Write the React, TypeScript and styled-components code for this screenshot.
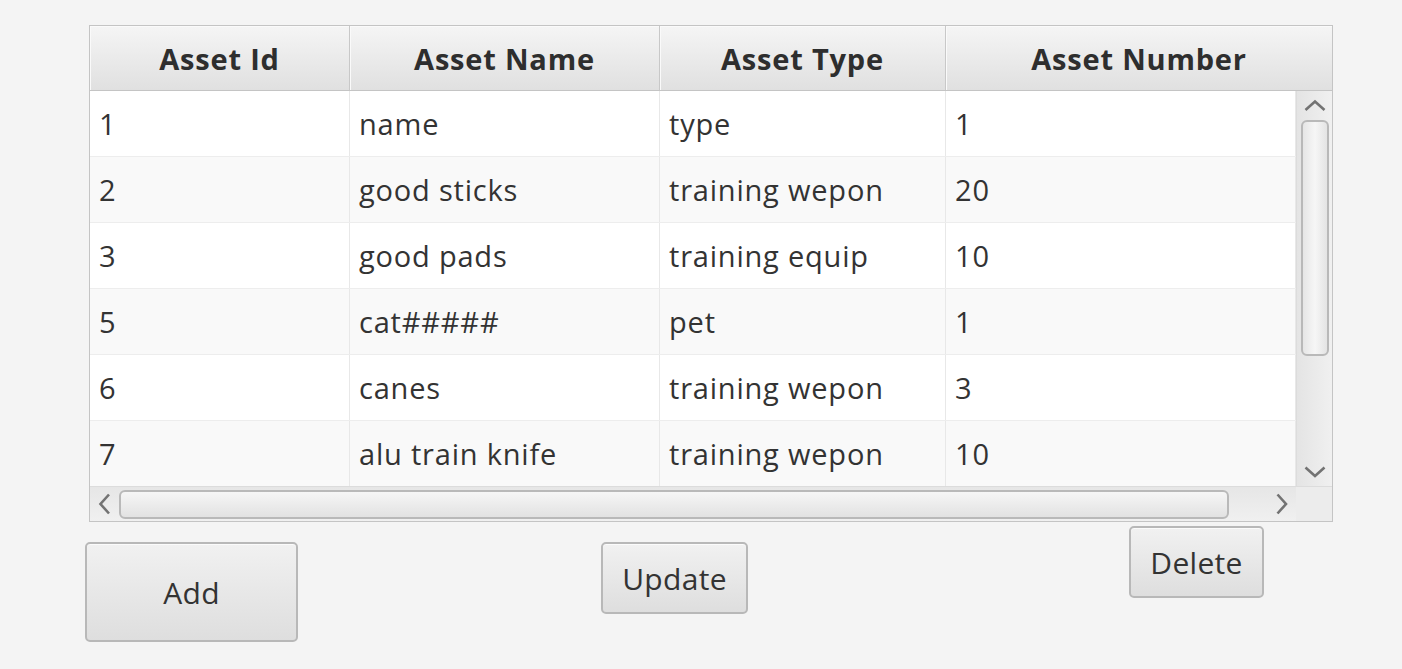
import React from "react";
import styled, { createGlobalStyle } from "styled-components";

const GlobalStyle = createGlobalStyle`
  html, body { margin: 0; padding: 0; background: #f4f4f4; }
  body { font-family: "Open Sans", "Noto Sans", "DejaVu Sans", sans-serif; color: #333; }
`;

const COLS = [260, 310, 286, 350];
const HEAD_COLS = [260, 310, 286, 386];

const rows = [
  ["1", "name", "type", "1"],
  ["2", "good sticks", "training wepon", "20"],
  ["3", "good pads", "training equip", "10"],
  ["5", "cat#####", "pet", "1"],
  ["6", "canes", "training wepon", "3"],
  ["7", "alu train knife", "training wepon", "10"],
];

const Page = styled.div`
  width: 1402px;
  height: 669px;
  box-sizing: border-box;
  padding: 25px 0 0 85px;
  background: #f4f4f4;
  overflow: hidden;
`;

const Table = styled.div`
  margin-left: 4px;
  width: 1244px;
  height: 497px;
  box-sizing: border-box;
  border: 1px solid #c4c4c4;
  background: #fff;
  display: grid;
  grid-template-rows: 65px 395px 35px;
`;

const Header = styled.div`
  display: flex;
  border-bottom: 1px solid #c4c4c4;
  box-sizing: border-box;
`;

const HeadCell = styled.div<{ $w: number; $last?: boolean }>`
  width: ${(p) => p.$w}px;
  flex: none;
  box-sizing: border-box;
  display: flex;
  align-items: center;
  justify-content: center;
  background: linear-gradient(#f5f5f5, #e0e0e0);
  border-right: ${(p) => (p.$last ? "none" : "1px solid #c8c8c8")};
  box-shadow: inset 1px 1px 0 #fafafa;
  font-weight: 700;
  font-size: 29px;
  color: #2e2e2e;
  letter-spacing: 0.8px;
`;

const BodyArea = styled.div`
  display: flex;
  overflow: hidden;
`;

const Rows = styled.div`
  width: 1206px;
  flex: none;
  overflow: hidden;
`;

const Row = styled.div<{ $odd: boolean }>`
  display: flex;
  height: 66px;
  box-sizing: border-box;
  background: ${(p) => (p.$odd ? "#f9f9f9" : "#ffffff")};
  border-bottom: 1px solid #ededed;
`;

const Cell = styled.div<{ $w: number }>`
  width: ${(p) => p.$w}px;
  flex: none;
  box-sizing: border-box;
  padding-left: 9px;
  display: flex;
  align-items: center;
  border-right: 1px solid #e8e8e8;
  font-size: 29px;
  letter-spacing: 0.8px;
  color: #333;
  white-space: nowrap;
`;

const VScroll = styled.div`
  width: 36px;
  flex: none;
  box-sizing: border-box;
  border-left: 1px solid #dcdcdc;
  background: linear-gradient(90deg, #e4e4e4, #f0f0f0);
  display: flex;
  flex-direction: column;
  align-items: center;
`;

const ArrowBox = styled.div<{ $h: number; $grow?: boolean }>`
  height: ${(p) => p.$h}px;
  width: 100%;
  flex: ${(p) => (p.$grow ? "1" : "none")};
  display: flex;
  align-items: center;
  justify-content: center;
`;

const VThumb = styled.div`
  width: 28px;
  height: 236px;
  flex: none;
  box-sizing: border-box;
  border: 2px solid #b9b9b9;
  border-radius: 6px;
  background: linear-gradient(90deg, #e6e6e6, #f6f6f6 50%, #e4e4e4);
`;

const HScroll = styled.div`
  display: flex;
  align-items: center;
  background: linear-gradient(#e6e6e6, #f0f0f0);
  border-top: 1px solid #dcdcdc;
  box-sizing: border-box;
`;

const HThumb = styled.div`
  width: 1110px;
  height: 29px;
  flex: none;
  box-sizing: border-box;
  border: 2px solid #b9b9b9;
  border-radius: 6px;
  background: linear-gradient(#f6f6f6, #e2e2e2);
`;

const HArrow = styled.div<{ $w: number; $grow?: boolean }>`
  width: ${(p) => p.$w}px;
  height: 100%;
  flex: ${(p) => (p.$grow ? "1" : "none")};
  display: flex;
  align-items: center;
  justify-content: center;
`;

const Corner = styled.div`
  width: 36px;
  height: 100%;
  flex: none;
  background: #ececec;
`;

const ButtonRow = styled.div`
  display: flex;
  align-items: flex-start;
`;

const Button = styled.button<{ $w: number; $h: number; $ml: number; $mt: number }>`
  width: ${(p) => p.$w}px;
  height: ${(p) => p.$h}px;
  margin-left: ${(p) => p.$ml}px;
  margin-top: ${(p) => p.$mt}px;
  flex: none;
  box-sizing: border-box;
  border: 2px solid #b8b8b8;
  border-radius: 5px;
  background: linear-gradient(#f1f1f1, #dedede);
  box-shadow: inset 0 1px 0 #fbfbfb;
  font-family: "Open Sans", "Noto Sans", sans-serif;
  font-size: 30px;
  letter-spacing: 0.3px;
  color: #333;
  padding: 0;
`;

const Chevron = ({ dir }: { dir: "up" | "down" | "left" | "right" }) => {
  const paths: Record<string, string> = {
    up: "M1.5 11 L11 2.5 L20.5 11",
    down: "M1.5 2.5 L11 11 L20.5 2.5",
    left: "M11 1.5 L2.5 11 L11 20.5",
    right: "M2.5 1.5 L11 11 L2.5 20.5",
  };
  const vertical = dir === "up" || dir === "down";
  return (
    <svg
      width={vertical ? 22 : 14}
      height={vertical ? 14 : 22}
      viewBox={vertical ? "0 0 22 14" : "0 0 14 22"}
      style={{ display: "block", flex: "none" }}
    >
      <path d={paths[dir]} fill="none" stroke="#737373" strokeWidth="2.6" />
    </svg>
  );
};

export default function App() {
  return (
    <>
      <GlobalStyle />
      <Page>
        <Table>
          <Header>
            {["Asset Id", "Asset Name", "Asset Type", "Asset Number"].map((h, i) => (
              <HeadCell key={h} $w={HEAD_COLS[i]} $last={i === 3}>
                {h}
              </HeadCell>
            ))}
          </Header>
          <BodyArea>
            <Rows>
              {rows.map((r, ri) => (
                <Row key={ri} $odd={ri % 2 === 1}>
                  {r.map((c, ci) => (
                    <Cell key={ci} $w={COLS[ci]}>
                      {c}
                    </Cell>
                  ))}
                </Row>
              ))}
            </Rows>
            <VScroll>
              <ArrowBox $h={29}>
                <Chevron dir="up" />
              </ArrowBox>
              <VThumb />
              <ArrowBox $h={0} $grow />
              <ArrowBox $h={29}>
                <Chevron dir="down" />
              </ArrowBox>
            </VScroll>
          </BodyArea>
          <HScroll>
            <HArrow $w={29}>
              <Chevron dir="left" />
            </HArrow>
            <HThumb />
            <HArrow $w={0} $grow />
            <HArrow $w={28}>
              <Chevron dir="right" />
            </HArrow>
            <Corner />
          </HScroll>
        </Table>
        <ButtonRow>
          <Button $w={213} $h={100} $ml={0} $mt={20}>Add</Button>
          <Button $w={147} $h={72} $ml={303} $mt={20}>Update</Button>
          <Button $w={135} $h={72} $ml={381} $mt={4}>Delete</Button>
        </ButtonRow>
      </Page>
    </>
  );
}
